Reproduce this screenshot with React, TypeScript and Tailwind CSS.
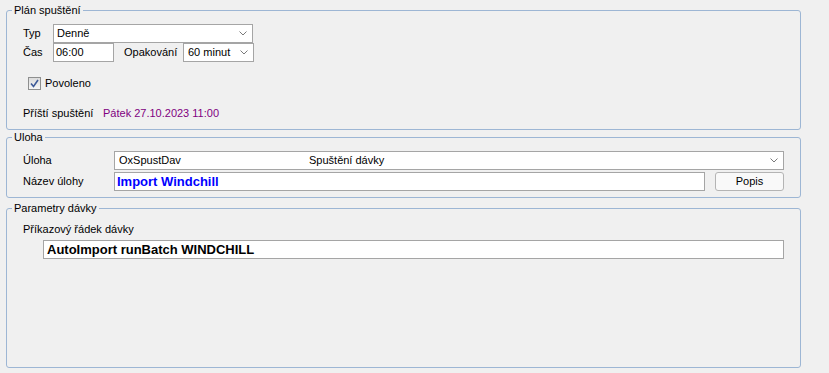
import React from "react";

const font = { fontFamily: '"Liberation Sans", Arial, sans-serif' };

function Chevron() {
  return (
    <svg width="8" height="5" viewBox="0 0 8 5" className="shrink-0">
      <path d="M0.5 0.5 L4 4 L7.5 0.5" fill="none" stroke="#7a7a7a" strokeWidth="1" />
    </svg>
  );
}

function GroupBox({ title, className, children }: { title: string; className: string; children: React.ReactNode }) {
  return (
    <fieldset className={`w-[795px] border border-[#9db6d4] rounded-[3px] p-0 m-0 ${className}`}>
      <legend className="ml-[5px] px-[2px] text-[11px] leading-[14px] text-black">{title}</legend>
      {children}
    </fieldset>
  );
}

export default function App() {
  return (
    <div className="w-[829px] h-[373px] bg-[#f0f0f0] pl-[6px] pt-[3px] overflow-hidden text-[11px] text-black" style={font}>
      {/* Plán spuštění */}
      <GroupBox title="Plán spuštění" className="h-[127px]">
        <div className="pl-[16px] pt-[7px]">
          <div className="flex items-center h-[19px]">
            <span className="w-[30px]">Typ</span>
            <div className="w-[200px] h-[19px] bg-white border border-[#a5a5a5] flex items-center justify-between pl-[3px] pr-[5px]">
              <span>Denně</span>
              <Chevron />
            </div>
          </div>
          <div className="flex items-center h-[19px]">
            <span className="w-[30px]">Čas</span>
            <div className="w-[61px] h-[19px] bg-white border border-[#a5a5a5] flex items-center pl-[2px]">06:00</div>
            <span className="ml-[10px] w-[59px]">Opakování</span>
            <div className="w-[71px] h-[19px] bg-white border border-[#a5a5a5] flex items-center justify-between pl-[4px] pr-[5px]">
              <span>60 minut</span>
              <Chevron />
            </div>
          </div>
          <div className="flex items-center h-[15px] mt-[14px] pl-[5px]">
            <div className="w-[13px] h-[13px] border border-[#8e8f8f] bg-gradient-to-b from-[#dcdcdc] to-[#f6f6f6] flex items-center justify-center">
              <svg width="9" height="9" viewBox="0 0 9 9">
                <path d="M1 4.5 L3.5 7.5 L8 1" fill="none" stroke="#3d5a98" strokeWidth="1.6" />
              </svg>
            </div>
            <span className="ml-[4px]">Povoleno</span>
          </div>
          <div className="flex items-center h-[15px] mt-[15px]">
            <span className="w-[80px]">Příští spuštění</span>
            <span className="text-[#800080]">Pátek 27.10.2023 11:00</span>
          </div>
        </div>
      </GroupBox>

      {/* Uloha */}
      <GroupBox title="Uloha" className="h-[68px]">
        <div className="pl-[16px] pt-[7px]">
          <div className="flex items-center h-[19px]">
            <span className="w-[91px]">Úloha</span>
            <div className="w-[670px] h-[19px] bg-white border border-[#a5a5a5] flex items-center pl-[4px] pr-[5px]">
              <span className="w-[190px]">OxSpustDav</span>
              <span className="flex-1">Spuštění dávky</span>
              <Chevron />
            </div>
          </div>
          <div className="flex items-center h-[19px] mt-[2px]">
            <span className="w-[91px]">Název úlohy</span>
            <div className="w-[591px] h-[19px] bg-white border border-[#a5a5a5] flex items-center pl-[2px] text-[13px] font-bold text-[#0000ff]">
              Import Windchill
            </div>
            <button className="ml-[10px] w-[69px] h-[19px] rounded-[3px] border border-[#b4b4b4] bg-[#f9f9f9] flex items-center justify-center text-[11px] text-black">
              Popis
            </button>
          </div>
        </div>
      </GroupBox>

      {/* Parametry dávky */}
      <GroupBox title="Parametry dávky" className="h-[167px] mt-[3px]">
        <div className="pl-[16px] pt-[7px]">
          <div className="flex items-center h-[15px]">Příkazový řádek dávky</div>
          <div className="ml-[20px] mt-[3px] w-[741px] h-[19px] bg-white border border-[#a5a5a5] flex items-center pl-[3px] text-[13px] font-bold">
            AutoImport runBatch WINDCHILL
          </div>
        </div>
      </GroupBox>
    </div>
  );
}
